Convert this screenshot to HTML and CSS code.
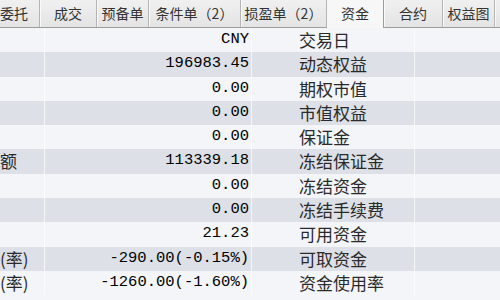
FILE: index.html
```html
<!DOCTYPE html>
<html lang="zh-CN">
<head>
    <meta charset="UTF-8">
    <title>资金</title>
    <link rel="stylesheet" href="styles.css">
</head>
<body>
    <div class="tabs">
        <div class="tab tab-first">委托</div>
        <div class="tab tab-w57">成交</div>
        <div class="tab tab-w52">预备单</div>
        <div class="tab tab-w92">条件单（2）</div>
        <div class="tab tab-w86">损盈单（2）</div>
        <div class="tab tab-w57 active">资金</div>
        <div class="tab tab-w59">合约</div>
        <div class="tab tab-w52">权益图</div>
        <div class="tab tab-rest"></div>
    </div>

    <div class="grid">
        <div class="row"><span class="c1"></span><span class="c2">CNY</span><span class="c3">交易日</span><span class="c4"></span></div>
        <div class="row"><span class="c1"></span><span class="c2">196983.45</span><span class="c3">动态权益</span><span class="c4"></span></div>
        <div class="row"><span class="c1"></span><span class="c2">0.00</span><span class="c3">期权市值</span><span class="c4"></span></div>
        <div class="row"><span class="c1"></span><span class="c2">0.00</span><span class="c3">市值权益</span><span class="c4"></span></div>
        <div class="row"><span class="c1"></span><span class="c2">0.00</span><span class="c3">保证金</span><span class="c4"></span></div>
        <div class="row"><span class="c1">额</span><span class="c2">113339.18</span><span class="c3">冻结保证金</span><span class="c4"></span></div>
        <div class="row"><span class="c1"></span><span class="c2">0.00</span><span class="c3">冻结资金</span><span class="c4"></span></div>
        <div class="row"><span class="c1"></span><span class="c2">0.00</span><span class="c3">冻结手续费</span><span class="c4"></span></div>
        <div class="row"><span class="c1"></span><span class="c2">21.23</span><span class="c3">可用资金</span><span class="c4"></span></div>
        <div class="row"><span class="c1">(率)</span><span class="c2">-290.00(-0.15%)</span><span class="c3">可取资金</span><span class="c4"></span></div>
        <div class="row"><span class="c1">(率)</span><span class="c2">-1260.00(-1.60%)</span><span class="c3">资金使用率</span><span class="c4"></span></div>
    </div>
</body>
</html>
```

FILE: styles.css
```css
* {
    margin: 0;
    padding: 0;
    box-sizing: border-box;
}

body {
    width: 500px;
    height: 300px;
    overflow: hidden;
    background: #f3f5f9;
    font-family: "Noto Sans CJK SC", sans-serif;
    color: #2a2a2a;
}

/* tab strip */
.tabs {
    display: flex;
    height: 28px;
    background: linear-gradient(#f0f0f0, #e4e4e4);
    border-bottom: 1px solid #9c9c9c;
}

.tab {
    flex: none;
    height: 27px;
    line-height: 26px;
    text-align: center;
    font-size: 14px;
    color: #333;
    border-right: 1px solid #b4b4b4;
    box-shadow: inset 1px 0 0 #fafafa;
    white-space: nowrap;
}

.tab-first {
    width: 40px;
    text-align: left;
    box-shadow: none;
}
.tab-w52 { width: 52px; }
.tab-w57 { width: 57px; }
.tab-w59 { width: 59px; }
.tab-w86 { width: 86px; }
.tab-w92 { width: 92px; }
.tab-rest { flex: 1; border-right: none; }

.tab.active {
    height: 28px;
    background: #f7f7f7;
    border-right: 1px solid #9c9c9c;
    box-shadow: none;
}

/* fund grid */
.grid {
    display: flex;
    flex-direction: column;
}

.row {
    display: grid;
    grid-template-columns: 45px 207px 163px 1fr;
    height: 24.3px;
    background: #f3f5f9;
}

.row:nth-child(even) {
    background: #dde0e6;
}

.row span {
    border-right: 1px solid rgba(255, 255, 255, 0.7);
    white-space: nowrap;
    overflow: hidden;
    line-height: 23px;
}

.c1 {
    font-size: 17px;
}

.c2 {
    text-align: right;
    padding-right: 2px;
    font-family: "Liberation Mono", monospace;
    font-size: 15.5px;
    color: #000;
}

.c3 {
    font-size: 17px;
    padding-left: 47px;
}

.row .c4 {
    border-right: none;
}
```
